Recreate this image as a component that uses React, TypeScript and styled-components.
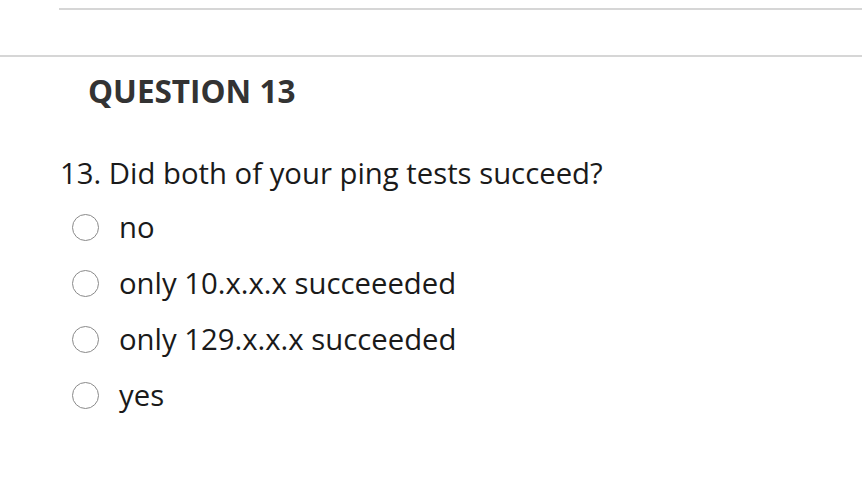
import styled, { createGlobalStyle } from "styled-components";

const GlobalStyle = createGlobalStyle`
  html, body {
    margin: 0;
    padding: 0;
    background: #ffffff;
    font-family: "Open Sans", "Noto Sans", sans-serif;
    color: #1a1a1a;
  }
`;

const Page = styled.div`
  width: 862px;
  height: 500px;
  overflow: hidden;
  padding-top: 8px;
  box-sizing: border-box;
`;

const TopRule = styled.hr`
  margin: 0 0 0 59px;
  border: none;
  height: 2px;
  background: #d6d6d6;
`;

const SectionRule = styled.hr`
  margin: 45px 0 0 0;
  border: none;
  height: 2px;
  background: #d6d6d6;
`;

const Heading = styled.h2`
  margin: 14px 0 0 88px;
  font-size: 31.5px;
  font-weight: 700;
  line-height: 40px;
  color: #333333;
`;

const Prompt = styled.p`
  margin: 42px 0 0 60px;
  font-size: 29.3px;
  line-height: 40px;
  color: #1a1a1a;
`;

const Options = styled.div`
  display: flex;
  flex-direction: column;
  gap: 16px;
  margin: 14px 0 0 72px;
`;

const Option = styled.label`
  display: flex;
  align-items: center;
  gap: 20px;
  height: 40px;
  font-size: 29.3px;
  color: #1a1a1a;
  cursor: pointer;
`;

const Radio = styled.input.attrs({ type: "radio" })`
  appearance: none;
  margin: 0;
  width: 27px;
  height: 27px;
  border: 1.5px solid #8a8a8a;
  border-radius: 50%;
  box-sizing: border-box;
  background: #ffffff;
  flex: none;
`;

const answers = [
  "no",
  "only 10.x.x.x succeeeded",
  "only 129.x.x.x succeeded",
  "yes",
];

export default function App() {
  return (
    <Page>
      <GlobalStyle />
      <TopRule />
      <SectionRule />
      <Heading>QUESTION 13</Heading>
      <Prompt>13. Did both of your ping tests succeed?</Prompt>
      <Options>
        {answers.map((a) => (
          <Option key={a}>
            <Radio name="q13" />
            {a}
          </Option>
        ))}
      </Options>
    </Page>
  );
}
